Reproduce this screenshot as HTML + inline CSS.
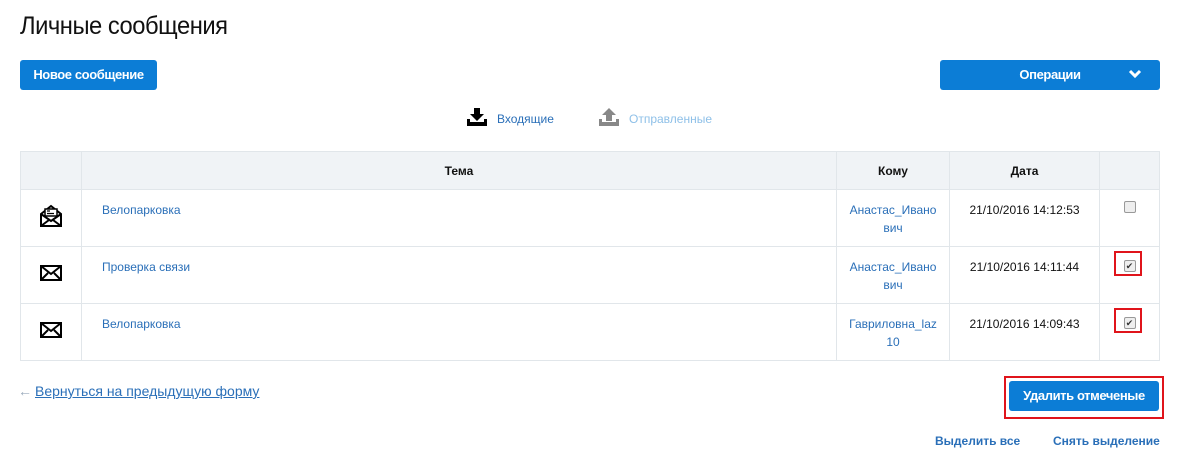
<!DOCTYPE html>
<html><head><meta charset="utf-8"><style>
*{box-sizing:border-box;margin:0;padding:0}
body{width:1179px;height:465px;background:#fff;font-family:"Liberation Sans",sans-serif;position:relative;overflow:hidden;color:#222}
.a{position:absolute}
h1{position:absolute;left:20px;top:12px;font-size:25px;font-weight:normal;color:#111;letter-spacing:-0.5px;transform:scaleX(.95);transform-origin:left}
.btn{position:absolute;background:#0c7dd6;color:#fff;border-radius:3px;font-size:13px;font-weight:bold;text-align:center;letter-spacing:-0.4px}
.lnk{color:#2a6fb8;font-size:12px}
table{position:absolute;left:20px;top:151px;width:1140px;border-collapse:collapse;font-size:12px}
td,th{border:1px solid #e1e6ea;vertical-align:top}
th{background:#f0f3f6;height:38px;vertical-align:middle;font-size:12px;color:#111}
td{height:57px}
.t{padding:13px 0 0 20px;color:#2a6fb8}
.k{text-align:center;color:#2a6fb8;padding-top:11px;line-height:18px}
.d{text-align:center;padding-top:13px;color:#111}
.ic{text-align:center;padding-top:14px}
.cb{display:inline-block;width:12px;height:12px;border:1px solid #999;border-radius:2px;background:#eee;font-size:9px;line-height:10px;text-align:center;color:#333}
.rb{position:absolute;border:2px solid #e0141b}
</style></head><body>
<h1>Личные сообщения</h1>
<div class="btn" style="left:20px;top:60px;width:137px;height:30px;line-height:30px">Новое сообщение</div>
<div class="btn" style="left:940px;top:60px;width:220px;height:30px;line-height:30px">Операции
<svg class="a" style="left:188px;top:9px" width="14" height="10" viewBox="0 0 14 10"><path d="M2 2l5 5 5-5" stroke="#fff" stroke-width="3" fill="none"/></svg></div>
<svg class="a" style="left:467px;top:108px" width="20" height="18" viewBox="0 0 20 18"><path d="M7 0h6v6h4l-7 7-7-7h4z" fill="#000"/><path d="M0 11h3v3h14v-3h3v7H0z" fill="#000"/></svg>
<div class="a lnk" style="left:497px;top:112px">Входящие</div>
<svg class="a" style="left:599px;top:108px" width="20" height="18" viewBox="0 0 20 18"><path d="M10 0l7 7h-4v6H7V7H3z" fill="#888"/><path d="M0 11h3v3h14v-3h3v7H0z" fill="#888"/></svg>
<div class="a lnk" style="left:629px;top:112px;color:#8ec0e8">Отправленные</div>
<table>
<tr><th style="width:61px"></th><th>Тема</th><th style="width:113px">Кому</th><th style="width:150px">Дата</th><th style="width:60px"></th></tr>
<tr><td class="ic"><svg width="24" height="24" viewBox="0 0 24 24"><path d="M2 10L12 2l10 8v12H2z" fill="none" stroke="#000" stroke-width="2"/><rect x="6" y="5" width="12" height="7" fill="#fff" stroke="#000" stroke-width="1.5"/><path d="M8 7h3M8 9.5h7" stroke="#000" stroke-width="1.3"/><path d="M2 10l10 7 10-7M2 22l8-6M22 22l-8-6" fill="none" stroke="#000" stroke-width="2"/></svg></td><td class="t">Велопарковка</td><td class="k">Анастас_Ивано<br>вич</td><td class="d">21/10/2016 14:12:53</td><td style="text-align:center;padding-top:11px"><span class="cb"></span></td></tr>
<tr><td class="ic" style="padding-top:18px"><svg width="22" height="16" viewBox="0 0 22 16"><rect x="1" y="1" width="20" height="14" fill="none" stroke="#000" stroke-width="2"/><path d="M1 1l10 8 10-8M1 15l7-7M21 15l-7-7" fill="none" stroke="#000" stroke-width="2"/></svg></td><td class="t">Проверка связи</td><td class="k">Анастас_Ивано<br>вич</td><td class="d">21/10/2016 14:11:44</td><td style="text-align:center;padding-top:11px"><span class="cb">✔</span></td></tr>
<tr><td class="ic" style="padding-top:18px"><svg width="22" height="16" viewBox="0 0 22 16"><rect x="1" y="1" width="20" height="14" fill="none" stroke="#000" stroke-width="2"/><path d="M1 1l10 8 10-8M1 15l7-7M21 15l-7-7" fill="none" stroke="#000" stroke-width="2"/></svg></td><td class="t">Велопарковка</td><td class="k">Гавриловна_laz<br>10</td><td class="d">21/10/2016 14:09:43</td><td style="text-align:center;padding-top:11px"><span class="cb">✔</span></td></tr>
</table>
<div class="rb" style="left:1114px;top:251px;width:28px;height:25px"></div>
<div class="rb" style="left:1114px;top:308px;width:28px;height:25px"></div>
<div class="a" style="left:18px;top:383px;font-size:14px;color:#2a6fb8"><span style="color:#9ab">←</span><span style="text-decoration:underline;margin-left:3px">Вернуться на предыдущую форму</span></div>
<div class="rb" style="left:1004px;top:376px;width:160px;height:43px"></div>
<div class="btn" style="left:1009px;top:381px;width:150px;height:30px;line-height:30px">Удалить отмеченые</div>
<div class="a" style="left:935px;top:434px;font-size:12px;font-weight:bold;color:#2a6fb8">Выделить все</div>
<div class="a" style="left:1053px;top:434px;font-size:12px;font-weight:bold;color:#2a6fb8">Снять выделение</div>
</body></html>
